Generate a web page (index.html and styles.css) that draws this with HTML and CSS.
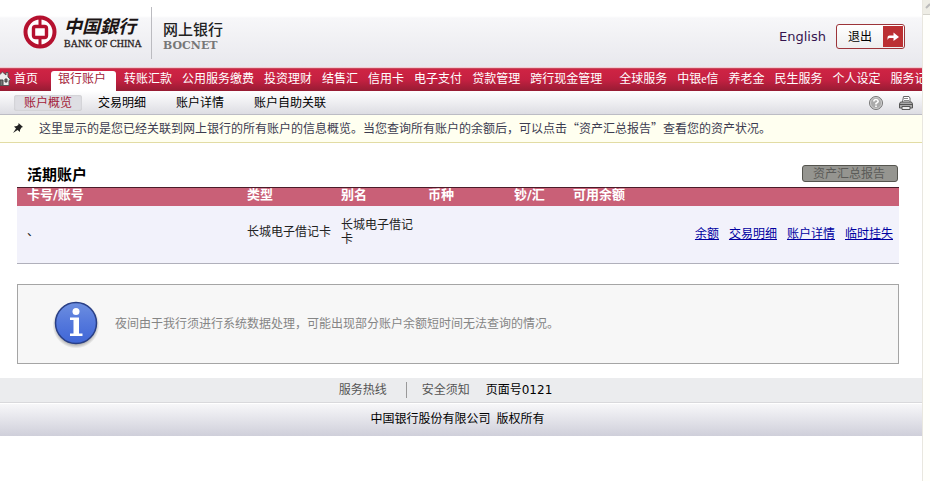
FILE: index.html
```html
<!DOCTYPE html>
<html lang="zh-CN">
<head>
<meta charset="utf-8">
<title>中国银行网上银行</title>
<link rel="stylesheet" href="styles.css">
</head>
<body>
<div class="page">
  <header class="header">
    <div class="brand">
      <svg class="emblem" viewBox="0 0 34 34" aria-hidden="true">
        <circle cx="17" cy="17" r="14.5" fill="#fff" stroke="#b5112f" stroke-width="4"/>
        <path d="M17 2v9M17 23v9" stroke="#b5112f" stroke-width="3"/>
        <rect x="10.5" y="11.5" width="13" height="11" rx="2" fill="#fff" stroke="#b5112f" stroke-width="3.4"/>
      </svg>
      <div class="bank"><span class="bank-cn">中国銀行</span><span class="bank-en">BANK OF CHINA</span></div>
      <div class="product"><span class="product-cn">网上银行</span><span class="product-en">BOCNET</span></div>
    </div>
    <div class="tools">
      <a class="language" href="#">English</a>
      <button class="logout" type="button"><span class="logout-text">退出</span><span class="logout-icon"><svg viewBox="0 0 19 21" aria-hidden="true"><path d="M4 14V11.500Q4 9.500 6 9.500H10V6.500L15.500 11L10 15V12H6Q4.800 12 4 14Z" fill="#fff"/></svg></span></button>
    </div>
  </header>
  <nav class="nav">
    <a class="home" href="#"><svg viewBox="0 0 11 16" aria-hidden="true"><path d="M-5 8L2.500 1L6 4V1.500H8V6L10.500 8.500L9 9.500V14.500H-4V9Z" fill="#eee" stroke="#555"/><path d="M0 14V9h3v5M5 8h2v3H5z" fill="#777" stroke="#444"/></svg>首页</a>
    <a class="tab" href="#">银行账户</a>
    <a href="#">转账汇款</a>
    <a href="#">公用服务缴费</a>
    <a href="#">投资理财</a>
    <a href="#">结售汇</a>
    <a href="#">信用卡</a>
    <a href="#">电子支付</a>
    <a href="#">贷款管理</a>
    <a href="#">跨行现金管理</a>
    <a class="group" href="#">全球服务</a>
    <a href="#">中银<span class="e">e</span>信</a>
    <a href="#">养老金</a>
    <a href="#">民生服务</a>
    <a href="#">个人设定</a>
    <a href="#">服务记录</a>
  </nav>
  <div class="subnav">
    <a class="current" href="#">账户概览</a>
    <a href="#">交易明细</a>
    <a href="#">账户详情</a>
    <a href="#">账户自助关联</a>
    <div class="utilities">
      <button type="button" aria-label="帮助"><svg viewBox="0 0 16 16" aria-hidden="true"><circle cx="8" cy="8" r="6.500" fill="#aaa" stroke="#777"/><circle cx="8" cy="8" r="5.500" fill="none" stroke="#ccc"/><path d="M5.800 6.500Q6 4.500 8 4.500T10.200 6.300Q10.200 7.500 8 8.500V9.500M8 10.500V12" fill="none" stroke="#fff" stroke-width="1.600"/></svg></button>
      <button type="button" aria-label="打印"><svg viewBox="0 0 16 16" aria-hidden="true"><path d="M4.500 7L5.500 1.500H11L12 3V7" fill="#fff" stroke="#666"/><path d="M6 3.500H10M6 5.500H11" stroke="#888"/><path d="M2.500 7H13.500L14.500 9V13H1.500V9Z" fill="#aaa" stroke="#555"/><path d="M2 9.500H14" stroke="#555"/><path d="M4 11.500H12V14.500H4Z" fill="#eee" stroke="#555"/></svg></button>
    </div>
  </div>
  <div class="hint">
    <svg viewBox="0 0 12 12" aria-hidden="true"><path d="M6.500 1L11 5L9.500 5.500L8 8L8 10L5.500 8L1 11L4 6.500L2 4.500L5 4L6.500 2.500Z" fill="#222"/></svg>
    <p>这里显示的是您已经关联到网上银行的所有账户的信息概览。当您查询所有账户的余额后，可以点击“资产汇总报告”查看您的资产状况。</p>
  </div>
  <main class="content">
    <div class="heading">
      <h1>活期账户</h1>
      <button class="report" type="button" disabled>资产汇总报告</button>
    </div>
    <table class="accounts">
      <colgroup><col class="col-number"><col class="col-type"><col class="col-alias"><col class="col-currency"><col class="col-cash"><col></colgroup>
      <thead><tr><th>卡号/账号</th><th>类型</th><th>别名</th><th>币种</th><th>钞/汇</th><th>可用余额</th></tr></thead>
      <tbody><tr><td>、</td><td class="type">长城电子借记卡</td><td>长城电子借记卡</td><td></td><td></td>
        <td><div class="actions"><a href="#">余额</a><a href="#">交易明细</a><a href="#">账户详情</a><a href="#">临时挂失</a></div></td></tr></tbody>
    </table>
    <section class="notice">
      <svg viewBox="0 0 48 50" aria-hidden="true">
        <defs><linearGradient id="ball" x1="0" y1="0" x2="0" y2="1"><stop offset="0" stop-color="#6d8fe0"/><stop offset="0.500" stop-color="#5478dc"/><stop offset="1" stop-color="#3f66d6"/></linearGradient>
        <radialGradient id="shade"><stop offset="0.800" stop-color="#888" stop-opacity="0.700"/><stop offset="1" stop-color="#888" stop-opacity="0"/></radialGradient></defs>
        <circle cx="24" cy="26" r="23.500" fill="url(#shade)"/>
        <circle cx="24" cy="24" r="20.500" fill="url(#ball)" stroke="#293f86" stroke-width="1.500"/>
        <circle cx="24" cy="12.500" r="3.500" fill="#fff"/>
        <path d="M18 18.500H27V34.500H30.500V37H18V34.500H21.500V21H18Z" fill="#fff"/>
      </svg>
      <p>夜间由于我行须进行系统数据处理，可能出现部分账户余额短时间无法查询的情况。</p>
    </section>
  </main>
  <footer>
    <div class="links"><a class="hotline" href="#">服务热线</a><a class="safety" href="#">安全须知</a><span>页面号0121</span></div>
    <div class="copyright"><span>中国银行股份有限公司</span><span>版权所有</span></div>
  </footer>
</div>
<div class="rail"><div class="rail-cap"><svg viewBox="0 0 7 14" aria-hidden="true"><path d="M3 8L7 4" stroke="#bbb" stroke-width="2"/></svg></div></div>
</body>
</html>
```
FILE: styles.css
```css
* { box-sizing: border-box; }
body {
  display: grid;
  grid-template-columns: minmax(0, 1fr) 8px;
  min-height: 100vh;
  margin: 0;
  background: #fff;
  color: #000;
  font: 12px/16px "DejaVu Sans", "Noto Sans CJK SC", sans-serif;
}
a { color: inherit; text-decoration: none; }
p, h1 { margin: 0; }
svg { display: block; overflow: hidden; }
button { padding: 0; border: 0; background: none; color: inherit; font: inherit; }
.page { overflow: hidden; }
.rail { border-left: 1px solid #e9e7df; background: #fffffb; }
.rail-cap { height: 15px; border-bottom: 1px solid #d5d4cc; background: #eeede5; }
.rail-cap svg { width: 7px; height: 14px; }

.header {
  display: flex;
  justify-content: space-between;
  height: 68px;
  padding: 0 17px 0 23px;
  border-bottom: 1px solid #f4c9d0;
  background: linear-gradient(#fff 16px, #f7f7f9 18px, #e8e8ed);
}
.brand { display: flex; align-items: flex-start; }
.emblem { width: 34px; height: 34px; margin-top: 15px; }
.bank { display: flex; flex-direction: column; width: 77px; margin: 14px 0 0 7px; white-space: nowrap; }
.bank-cn { color: #1c1515; font: italic 700 18px/23px "Noto Sans CJK SC", sans-serif; }
.bank-en { color: #2c2424; font: 10px/14px "Liberation Serif", serif; -webkit-text-stroke: 0.3px #2c2424; }
.product {
  display: flex;
  flex-direction: column;
  height: 52px;
  margin: 7px 0 0 10px;
  padding: 13px 0 0 11px;
  border-left: 1px solid #bbbbc0;
}
.product-cn { color: #222; font: 500 15px/18px "Noto Sans CJK SC", sans-serif; }
.product-en { color: #777; font: 700 11px/15px "DejaVu Serif", serif; }
.tools { display: flex; gap: 10px; padding-top: 24px; }
.language { color: #36154f; font-size: 13px; line-height: 25px; }
.logout {
  display: flex;
  align-items: center;
  height: 25px;
  padding: 1px 1px 1px 11px;
  border: 1px solid #9c3439;
  border-radius: 3px;
  background: linear-gradient(#fff, #eee);
}
.logout-text { margin-right: 11px; }
.logout-icon { background: #bb3033; }
.logout-icon svg { width: 20px; height: 21px; }

.nav {
  display: flex;
  gap: 10px;
  height: 23px;
  border-top: 1px solid #c74a5e;
  background: linear-gradient(#cf2444, #c42041 50%, #961c33);
  color: #fff;
  line-height: 21px;
  white-space: nowrap;
}
.nav a { flex: none; }
.home { display: flex; gap: 3px; }
.home svg { width: 11px; height: 16px; margin-top: 2px; }
.nav .tab {
  margin: 2px -2px 0 3px;
  padding: 0 10px 0 7px;
  border-radius: 3px 3px 0 0;
  background: #fff;
  color: #a31b38;
  line-height: 17px;
}
.nav .group { margin-left: 7px; }
.e { font-family: "Liberation Serif", serif; }

.subnav {
  display: flex;
  align-items: center;
  gap: 30px;
  height: 24px;
  padding: 0 8px 0 14px;
  border-bottom: 1px solid #bcbcc4;
  background: linear-gradient(#fff, #dddde3);
}
.current {
  margin-right: -14px;
  padding: 0 10px;
  border-radius: 3px;
  background: #dedee3;
  box-shadow: inset 0 0 2px #bbb;
  color: #a31b38;
}
.utilities { display: flex; gap: 14px; margin-left: auto; }
.utilities svg { width: 16px; height: 16px; }
.hint {
  display: flex;
  align-items: center;
  gap: 15px;
  height: 28px;
  padding: 0 12px 2px;
  border-bottom: 1px solid #e2dca4;
  background: #fffff0;
  color: #3c3c50;
  font-family: "Noto Sans CJK SC", sans-serif;
}
.hint svg { flex: none; width: 12px; height: 12px; }

.content { padding: 21px 23px 14px 17px; }
.heading { display: flex; justify-content: space-between; align-items: center; height: 23px; padding: 0 1px 4px 10px; }
h1 { font: 700 15px/20px "Noto Sans CJK SC", sans-serif; }
.report {
  height: 17px;
  padding: 0 12px 0 10px;
  border: 1px solid #55554f;
  border-radius: 3px;
  background: #959590;
  color: #5b5b58;
  line-height: 14px;
}
.accounts { width: 100%; border-collapse: collapse; table-layout: fixed; }
.col-number { width: 220px; }
.col-type { width: 94px; }
.col-alias { width: 87px; }
.col-currency { width: 86px; }
.col-cash { width: 59px; }
th, td { padding: 0 0 0 10px; text-align: left; }
th {
  height: 18px;
  padding-bottom: 3px;
  border-top: 1px solid #4b1c29;
  background: #c96077;
  color: #fff;
  font-size: 13px;
  line-height: 14px;
  white-space: nowrap;
}
td {
  height: 58px;
  padding-bottom: 4px;
  border-bottom: 1px solid #b0b0bb;
  background: #f2f2fb;
  color: #222;
  line-height: 14px;
}
.type { white-space: nowrap; }
.actions { display: flex; justify-content: flex-end; gap: 10px; padding: 4px 6px 0 0; color: #0000a0; }
.actions a { text-decoration: underline; }
.notice {
  display: flex;
  align-items: center;
  gap: 15px;
  min-height: 80px;
  margin-top: 20px;
  padding: 0 34px;
  border: 1px solid #a5a5a5;
  background: #f7f7f7;
  color: #858585;
}
.notice svg { flex: none; width: 48px; height: 50px; }

.links {
  display: flex;
  justify-content: center;
  height: 25px;
  padding: 4px 31px 0 0;
  border-bottom: 1px solid #d9d9dc;
  background: #ebecee;
}
.hotline, .safety { color: #555; }
.hotline { padding-right: 19px; border-right: 1px solid #999; }
.safety { padding: 0 16px 0 15px; }
.hotline, .safety, .links span { height: 16px; }
.copyright {
  display: flex;
  justify-content: center;
  gap: 6px;
  height: 33px;
  padding: 7px 7px 0 0;
  border-top: 1px solid #fff;
  background: linear-gradient(#f7f7f9, #cfcfda);
}
```
